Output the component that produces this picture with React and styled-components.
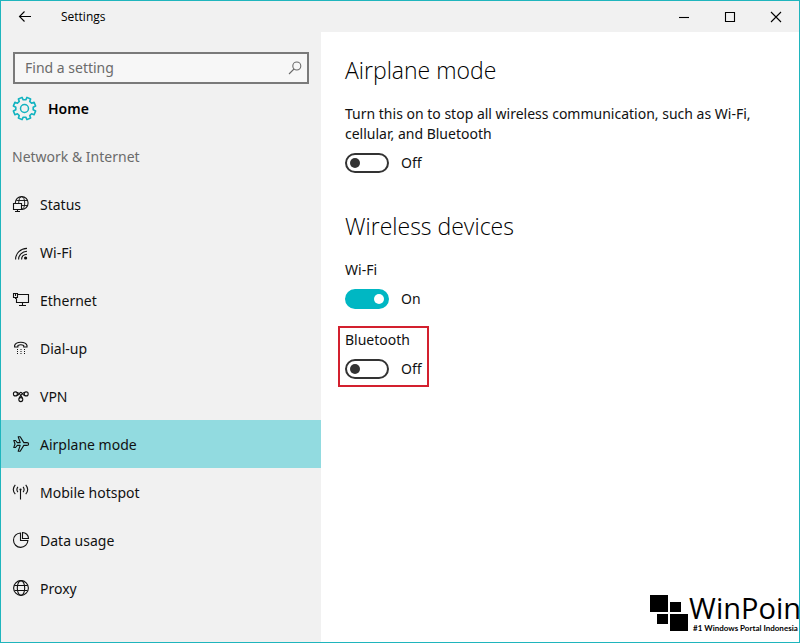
import { useState } from 'react'
import styled, { createGlobalStyle } from 'styled-components';

const GlobalStyle = createGlobalStyle`
    *{
        box-sizing:border-box;
    }
    body{
        margin:0;
        background:#fff;
        color:#111;
        font-family:"Noto Sans", "Open Sans", sans-serif;
        font-size:14px;
        line-height:20px;
    }
`
const Window = styled.div`
    display:flex;
    flex-direction:column;
    min-height:100vh;
    border:1px solid #1fb5bd;
    overflow:hidden;
`
const TitleBar = styled.header`
    display:flex;
    align-items:center;
    height:31px;
    background:#f1f1f1;
`
const WindowTitle = styled.span`
    flex:1;
    padding-left:12px;
    font-family:"Open Sans", sans-serif;
    font-size:12px;
    line-height:16px;
    color:#000;
`
const BarButton = styled.button`
    display:flex;
    align-items:center;
    justify-content:center;
    width:${({ $wide }) => ($wide ? '46px' : '48px')};
    height:30px;
    padding:0;
    border:0;
    background:transparent;
    color:#000;
`
const Body = styled.div`
    display:flex;
    flex:1;
`
const Sidebar = styled.aside`
    flex:0 0 320px;
    padding-top:20px;
    background:#f1f1f1;
`
const SearchBox = styled.label`
    display:flex;
    align-items:center;
    height:32px;
    margin:0 12px;
    padding:0 4px 0 10px;
    border:2px solid #7a7a7a;
    background:#f7f7f7;
    color:#6b6b6b;
`
const SearchInput = styled.input`
    flex:1;
    min-width:0;
    padding:0;
    border:0;
    outline:0;
    background:transparent;
    font:inherit;
    &::placeholder{
        color:#6b6b6b;
        opacity:1;
    }
`
const HomeLink = styled.a`
    display:flex;
    align-items:center;
    gap:11px;
    height:48px;
    padding-left:11px;
    color:#000;
    font-weight:600;
    text-decoration:none;
    svg{
        color:#12b3c0;
    }
`
const SectionTitle = styled.h2`
    height:48px;
    margin:0;
    padding-left:11px;
    font-size:14px;
    font-weight:400;
    line-height:50px;
    color:#6b6b6b;
`
const NavLink = styled.a`
    display:flex;
    align-items:center;
    gap:10px;
    height:48px;
    padding-left:11px;
    background:${({ $active }) => ($active ? '#92dbe0' : 'transparent')};
    color:#111;
    text-decoration:none;
`
const NavText = styled.span`
    padding-top:2px;
`
const Content = styled.main`
    display:flex;
    flex:1;
    flex-direction:column;
    min-width:0;
    padding:22px 0 8px 24px;
`
const Heading = styled.h1`
    margin:0;
    color:#000;
    font-family:"Open Sans", sans-serif;
    font-size:23px;
    font-weight:300;
    line-height:32px;
`
const Section = styled.section`
    margin-bottom:37px;
`
const Description = styled.p`
    max-width:420px;
    margin:18px 0 0;
`
const Setting = styled.div`
    width:fit-content;
    margin-top:${({ $first }) => ($first ? '14px' : '9px')};
    margin-left:-7px;
    padding:2px 5px 6px;
    border:2px solid ${({ $marked }) => ($marked ? '#d3202e' : 'transparent')};
`
const SettingName = styled.label`
    display:block;
`
const SwitchRow = styled.div`
    display:flex;
    align-items:center;
    gap:12px;
    margin-top:9px;
`
const SwitchInput = styled.input`
    appearance:none;
    display:flex;
    align-items:center;
    width:44px;
    height:20px;
    margin:0;
    padding:0 3px;
    border:2px solid #333;
    border-radius:10px;
    background:#fff;
    &::before{
        content:"";
        width:10px;
        height:10px;
        border-radius:50%;
        background:#333;
    }
    &:checked{
        justify-content:flex-end;
        border-color:#00b7c3;
        background:#00b7c3;
    }
    &:checked::before{
        background:#fff;
    }
`
const Brand = styled.footer`
    display:flex;
    align-items:flex-start;
    justify-content:flex-end;
    margin-top:auto;
    margin-right:-2px;
    color:#000;
`
const BrandText = styled.div`
    display:flex;
    flex-direction:column;
`
const BrandName = styled.span`
    font-family:"Open Sans", sans-serif;
    font-size:29px;
    line-height:28px;
`
const Tagline = styled.span`
    padding-left:4px;
    font-family:Lato, sans-serif;
    font-size:8px;
    font-weight:700;
    line-height:12px;
`
const Svg = styled.svg`
    flex:none;
    fill:none;
    stroke:currentColor;
    stroke-width:1.1;
`
const Icon = ({ size = 18, children }) => (
    <Svg width={size} height={size} viewBox={`0 0 ${size} ${size}`} aria-hidden="true">{children}</Svg>
)

// 8 teeth, drawn clockwise from the top right one
const gearPath = () => {
    const points = [];
    for (let i = 0; i < 8; i++) {
        [[-14, 8.8], [-10, 11.4], [10, 11.4], [14, 8.8]].forEach(([offset, radius]) => {
            const angle = (i * 45 + 22.5 + offset) * Math.PI / 180;
            points.push(`${(12.5 + radius * Math.sin(angle)).toFixed(2)} ${(12.5 - radius * Math.cos(angle)).toFixed(2)}`);
        })
    }
    return `M${points.join('L')}Z`;
}

const navList = [
    {
        name: 'Status', icon: <>
            <circle cx="9.7" cy="8" r="6.4" />
            <ellipse cx="9.7" cy="8" rx="3" ry="6.4" strokeWidth="0.9" />
            <path d="M4.3 5.5H15.1M9 10.5H15.5" strokeWidth="0.9" />
            <path fill="#f1f1f1" d="M1.5 8.5H9.5V14.5H1.5Z" />
            <path d="M5.5 14.5V16.5M3 16.5H8" />
        </>
    },
    {
        name: 'Wi-Fi', icon: <>
            <path d="M3.6 16.5C3.6 10.2 8.5 5.6 15 5.4M6.6 16.5C6.6 12 10 8.5 15 8.3M9.6 16.5C9.6 13.6 11.8 11.4 15 11.2" />
            <circle cx="13.6" cy="15" r="1.6" fill="currentColor" stroke="none" />
        </>
    },
    {
        name: 'Ethernet', icon: <>
            <path d="M6 3.5H16.5V11.5H4.5V7.5M10.5 11.5V14.5M7 14.5H14" />
            <path d="M1.5 2.5H5.5V6.5H1.5ZM3.5 2.5V5M3.5 6.5V7.5H4.5" />
        </>
    },
    {
        name: 'Dial-up', icon: <>
            <path d="M2.6 8V6.5C3.3 4 6 3.2 8.8 3.2S14.3 4 15 6.5V8H11.7V6.5C10 5.7 7.6 5.7 5.9 6.5V8Z" />
            <path d="M5 10.5H6M8.5 10.5H9.5M12 10.5H13M5 12.5H6M8.5 12.5H9.5M12 12.5H13M5 14.5H6M8.5 14.5H9.5M12 14.5H13" strokeWidth="1" />
        </>
    },
    {
        name: 'VPN', icon: <>
            <circle cx="3.4" cy="6.9" r="2" />
            <circle cx="8.8" cy="12.6" r="2" />
            <circle cx="14.2" cy="6.9" r="2" />
            <path d="M4.4 5.2C7 5.2 9 8.2 10.6 11.6M4.8 8.4C7.4 8.4 7 5.4 8.8 5.4S10.4 8.4 12.8 8.4M13.2 5.2C10.6 5.2 8.6 8.2 7 11.6" />
        </>
    },
    {
        name: 'Airplane mode', icon: <path strokeLinejoin="round" d="M1.8 5.5H3.5L5.3 7.6H8.2L6.2 1.7H8.2L11.8 7.6H15C16 7.6 16.6 8.3 16.6 9S16 10.4 15 10.4H11.8L8.2 16.3H6.2L8.2 10.4H5.3L3.5 12.5H1.8L3 9Z" />
    },
    {
        name: 'Mobile hotspot', icon: <>
            <path d="M8.5 6.5V16.5M5.9 9.2C4.7 7.6 4.7 5.4 5.9 3.8M11.1 3.8C12.3 5.4 12.3 7.6 11.1 9.2M3.3 11.2C.9 8.4 .9 4.6 3.3 1.8M13.7 1.8C16.1 4.6 16.1 8.4 13.7 11.2" />
            <circle cx="8.5" cy="6.5" r="1.1" fill="currentColor" stroke="none" />
        </>
    },
    {
        name: 'Data usage', icon: <path d="M8.5 2A7.2 7.2 0 1 0 15.9 9.5H8.5ZM10.5 1.5V7.5H16.5A6 6 0 0 0 10.5 1.5Z" />
    },
    {
        name: 'Proxy', icon: <>
            <circle cx="9" cy="9" r="7.4" />
            <ellipse cx="9" cy="9" rx="3.7" ry="7.4" />
            <path d="M2.5 6.5H15.5M2.5 11.5H15.5" />
        </>
    },
]

const Switch = ({ id, label, defaultOn = false }) => {
    const [on, setOn] = useState(defaultOn);
    return (
        <SwitchRow>
            <SwitchInput type="checkbox" role="switch" id={id} aria-label={label} checked={on} onChange={() => setOn(!on)} />
            <span>{on ? 'On' : 'Off'}</span>
        </SwitchRow>
    );
}

const App = () => {
    return (
        <>
            <GlobalStyle />
            <Window>
                <TitleBar>
                    <BarButton aria-label="Back">
                        <Icon size={16}><path d="M14 7.5H2.5M7.5 2.5L2.5 7.5L7.5 12.5" /></Icon>
                    </BarButton>
                    <WindowTitle>Settings</WindowTitle>
                    <BarButton $wide aria-label="Minimize">
                        <Icon size={12}><path d="M1 6.5H11" /></Icon>
                    </BarButton>
                    <BarButton $wide aria-label="Maximize">
                        <Icon size={12}><path d="M1.5 1.5H10.5V10.5H1.5Z" /></Icon>
                    </BarButton>
                    <BarButton $wide aria-label="Close">
                        <Icon size={12}><path d="M1 1L11 11M11 1L1 11" /></Icon>
                    </BarButton>
                </TitleBar>
                <Body>
                    <Sidebar>
                        <SearchBox>
                            <SearchInput type="text" placeholder="Find a setting" aria-label="Find a setting" />
                            <Icon size={16}>
                                <circle cx="9.8" cy="6" r="4" />
                                <path d="M7 9L2 14" />
                            </Icon>
                        </SearchBox>
                        <nav>
                            <HomeLink href="#home">
                                <Svg width="25" height="25" viewBox="0 0 25 25" aria-hidden="true">
                                    <path d={gearPath()} strokeWidth="1.6" strokeLinejoin="round" />
                                    <circle cx="12.5" cy="12.5" r="4" strokeWidth="1.5" />
                                </Svg>
                                <NavText>Home</NavText>
                            </HomeLink>
                            <SectionTitle>Network &amp; Internet</SectionTitle>
                            {navList.map((item) => (
                                <NavLink key={item.name} href="#settings" $active={item.name === 'Airplane mode'}>
                                    <Icon>{item.icon}</Icon>
                                    <NavText>{item.name}</NavText>
                                </NavLink>
                            ))}
                        </nav>
                    </Sidebar>
                    <Content>
                        <Section>
                            <Heading>Airplane mode</Heading>
                            <Description>
                                Turn this on to stop all wireless communication, such as Wi-Fi, cellular, and Bluetooth
                            </Description>
                            <Switch id="airplane" label="Airplane mode" />
                        </Section>
                        <Section>
                            <Heading as="h2">Wireless devices</Heading>
                            <Setting $first>
                                <SettingName htmlFor="wifi">Wi-Fi</SettingName>
                                <Switch id="wifi" defaultOn />
                            </Setting>
                            <Setting $marked>
                                <SettingName htmlFor="bluetooth">Bluetooth</SettingName>
                                <Switch id="bluetooth" />
                            </Setting>
                        </Section>
                        <Brand>
                            <Svg width="39" height="38" viewBox="0 0 39 38" aria-hidden="true">
                                <path fill="currentColor" stroke="none" d="M0 1H18V18H0ZM20 8H31V18H20ZM7 20H18V30H7ZM20 20H38V37H20Z" />
                            </Svg>
                            <BrandText>
                                <BrandName>WinPoin</BrandName>
                                <Tagline>#1 Windows Portal Indonesia</Tagline>
                            </BrandText>
                        </Brand>
                    </Content>
                </Body>
            </Window>
        </>
    );
}

export default App;
